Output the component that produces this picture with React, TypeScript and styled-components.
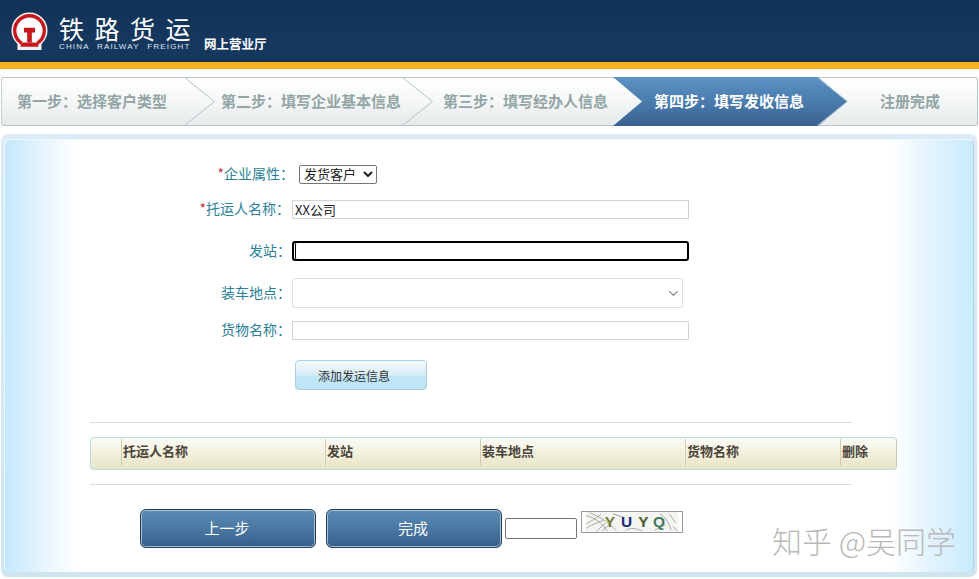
import { ChevronDown } from "lucide-react";
import styled, { createGlobalStyle } from "styled-components";

const CJK = `"Noto Sans CJK SC", "Liberation Sans", sans-serif`;

const steps = [
  { label: "第一步：选择客户类型", width: 183, inset: 15 },
  { label: "第二步：填写企业基本信息", width: 218, inset: 36 },
  { label: "第三步：填写经办人信息", width: 210, inset: 40 },
  { label: "第四步：填写发收信息", width: 205, inset: 41, active: true },
  { label: "注册完成", width: 159, inset: 62 },
];

const columns = ["", "托运人名称", "发站", "装车地点", "货物名称", "删除"];

const Logo = () => (
  <svg width="37" height="39" viewBox="0 0 40 42">
    <circle cx="20" cy="20" r="16" fill="#fff" stroke="#f2f2f2" strokeWidth="7" />
    <rect x="7" y="31" width="26" height="10" fill="#f2f2f2" />
    <path
      d="M11.400 33.500 A16 16 0 1 1 28.600 33.500"
      fill="none"
      stroke="#c8161d"
      strokeWidth="3.600"
    />
    <path d="M14 17h12v5h-3.500v11h-5V22H14z" fill="#c8161d" />
    <rect x="10.500" y="33" width="19" height="4.500" fill="#c8161d" />
  </svg>
);

const Chevron = ({ light }: { light?: boolean }) => (
  <ChevronMark width="32" height="50" viewBox="0 0 32 50">
    <path
      d="M0.500 0.500 L30.500 24.500 L0.500 48.500"
      fill="none"
      stroke={light ? "#a8c6d8" : "#b4c2c4"}
      strokeWidth="1"
    />
  </ChevronMark>
);

const Captcha = () => (
  <CaptchaBox width="102" height="22" viewBox="0 0 102 22">
    <rect width="102" height="22" fill="#f4f4f0" />
    <g stroke="#8c8c8c" strokeWidth="0.800" fill="none">
      <path d="M1 4 C10 6 18 12 24 21" />
      <path d="M4 1 C14 4 24 10 34 21" />
      <path d="M1 13 C5 10 11 8 17 2" />
      <path d="M1 18 C6 14 10 13 20 9" />
      <path d="M12 21 L22 12 M18 21 L27 13 M30 2 L42 6" />
      <path d="M44 20 C50 17 56 18 62 21 M82 2 C88 6 92 12 94 20" />
      <path d="M92 2 L99 12 M96 16 L101 21 M76 20 L88 14" />
    </g>
    <g fontFamily="Liberation Sans, sans-serif" fontWeight="700" fontSize="17">
      <text x="21" y="17" fill="#6f7a35">Y</text>
      <text x="39" y="17" fill="#1e2a78">U</text>
      <text x="58" y="17" fill="#4a5a2a">Y</text>
      <text x="74" y="17" fill="#3f7a5a">Q</text>
    </g>
  </CaptchaBox>
);

export default function App() {
  return (
    <>
      <GlobalStyle />
      <Header>
        <Logo />
        <Brand>
          <BrandName>铁路货运</BrandName>
          <BrandEnglish>CHINA RAILWAY FREIGHT</BrandEnglish>
        </Brand>
        <HallName>网上营业厅</HallName>
      </Header>
      <YellowBar />

      <StepBar>
        {steps.map((s, i) => (
          <Step
            key={s.label}
            $width={s.width}
            $inset={s.inset}
            $active={s.active}
          >
            {s.label}
            {i < steps.length - 1 && i !== 2 && <Chevron light={s.active} />}
          </Step>
        ))}
      </StepBar>

      <Panel>
        <Inner>
          <Row $top={25}>
            <FieldLabel $end={290} $gap={5}>
              <Star>*</Star>企业属性：
            </FieldLabel>
            <SmallSelect defaultValue="发货客户">
              <option>发货客户</option>
            </SmallSelect>
          </Row>
          <Row $top={16}>
            <FieldLabel $end={286} $gap={2}>
              <Star>*</Star>托运人名称：
            </FieldLabel>
            <TextInput defaultValue="XX公司" />
          </Row>
          <Row $top={22}>
            <FieldLabel $end={287}>发站：</FieldLabel>
            <FocusedInput />
          </Row>
          <Row $top={17}>
            <FieldLabel $end={287}>装车地点：</FieldLabel>
            <SelectWrap>
              <WideSelect />
              <SelectArrow size={15} strokeWidth={2} />
            </SelectWrap>
          </Row>
          <Row $top={13}>
            <FieldLabel $end={287}>货物名称：</FieldLabel>
            <TextInput />
          </Row>
          <AddButton type="button">添加发运信息</AddButton>

          <Rule $top={32} />
          <TableHead>
            {columns.map((c, i) => (
              <HeadCell key={i}>{c}</HeadCell>
            ))}
          </TableHead>
          <Rule $top={14} />

          <Actions>
            <NavButton type="button">上一步</NavButton>
            <NavButton type="button">完成</NavButton>
            <CodeInput />
            <Captcha />
          </Actions>

          <Watermark>知乎 @吴同学</Watermark>
        </Inner>
      </Panel>
    </>
  );
}

const GlobalStyle = createGlobalStyle`
  html, body {
    margin: 0;
    padding: 0;
    background: #fff;
    overflow: hidden;
  }
  body {
    font-family: ${CJK};
  }
`;

const Header = styled.header`
  height: 62px;
  box-sizing: border-box;
  padding: 12px 0 0 11px;
  display: flex;
  align-items: flex-start;
  background: linear-gradient(180deg, #123257 0%, #16385f 70%, #15365d 96%, #1c2f3a 100%);
`;

const Brand = styled.div`
  margin: 3px 0 0 11px;
  width: 134px;
  color: #fff;
`;

const BrandName = styled.div`
  font-size: 25px;
  line-height: 27px;
  letter-spacing: 10.500px;
  white-space: nowrap;
`;

const BrandEnglish = styled.div`
  font-family: "Liberation Sans", sans-serif;
  font-size: 8px;
  line-height: 9px;
  letter-spacing: 1.150px;
  word-spacing: 4.500px;
  white-space: nowrap;
  color: #dfe6ee;
`;

const HallName = styled.div`
  margin: 24px 0 0 11px;
  color: #fff;
  font-size: 12.500px;
  line-height: 16px;
  font-weight: 700;
  white-space: nowrap;
`;

const YellowBar = styled.div`
  height: 7px;
  background: #f6af1e;
`;

const StepBar = styled.nav`
  margin: 8px 1px 0;
  height: 49px;
  box-sizing: border-box;
  display: flex;
  border: 1px solid #b4c6c8;
  border-left-color: #c4d0d2;
  border-radius: 3px;
  background: linear-gradient(180deg, #ffffff 0%, #f6f8f8 45%, #e6eaea 100%);
`;

const Step = styled.div<{ $width: number; $inset: number; $active?: boolean }>`
  position: relative;
  flex: none;
  width: ${(p) => p.$width}px;
  box-sizing: border-box;
  padding: 0 0 3px ${(p) => p.$inset}px;
  display: flex;
  align-items: center;
  font-size: 15px;
  font-weight: 700;
  white-space: nowrap;
  color: ${(p) => (p.$active ? "#fff" : "#93a5a5")};
  ${(p) =>
    p.$active &&
    `
    z-index: 1;
    &::before {
      content: "";
      position: absolute;
      inset: -1px -29px -1px 0;
      z-index: -1;
      clip-path: polygon(0 0, calc(100% - 29px) 0, 100% 50%, calc(100% - 29px) 100%, 0 100%, 29px 50%);
      background: linear-gradient(180deg, #5c92c4 0%, #4a7cad 50%, #38618f 100%);
    }
  `}
`;

const ChevronMark = styled.svg`
  position: absolute;
  top: -1px;
  right: -31px;
  z-index: 2;
`;

const Panel = styled.main`
  margin: 8px 2px 0 1px;
  height: 443px;
  box-sizing: border-box;
  padding: 5px 3px 5px 3px;
  border-radius: 7px;
  background: linear-gradient(180deg, #dcebf6 0%, #d0e4f0 100%);
`;

const Inner = styled.div`
  position: relative;
  height: 100%;
  box-sizing: border-box;
  border-top: 1px solid #eef7fc;
  border-left: 1px solid #eef7fc;
  border-right: 1px solid #a9d3e8;
  border-radius: 6px;
  background: linear-gradient(
    90deg,
    #c3e8fc 0,
    #e4f4fd 36px,
    #ffffff 72px,
    #ffffff 886px,
    #e2f3fd 925px,
    #c9ebfc 968px
  );
`;

const Row = styled.div<{ $top: number }>`
  display: flex;
  align-items: center;
  margin-top: ${(p) => p.$top}px;
`;

const FieldLabel = styled.label<{ $end: number; $gap?: number }>`
  flex: none;
  width: ${(p) => p.$end - 1}px;
  margin-right: ${(p) => p.$gap ?? 1}px;
  padding-bottom: 2px;
  height: 17px;
  text-align: right;
  font-size: 14px;
  line-height: 17px;
  color: #2b7f98;
  white-space: nowrap;
`;

const Star = styled.span`
  color: #c8323c;
`;

const SmallSelect = styled.select`
  width: 78px;
  height: 19px;
  box-sizing: border-box;
  padding: 0;
  font-family: "Liberation Sans", "Noto Sans CJK SC", sans-serif;
  font-size: 13px;
  color: #222;
  background: #fff;
  border: 1px solid #767676;
  border-radius: 2px;
`;

const TextInput = styled.input`
  width: 397px;
  height: 19px;
  box-sizing: border-box;
  padding: 0 2px 1px;
  font-family: ${CJK};
  font-size: 13px;
  color: #222;
  background: #fff;
  border: 1px solid #d4d4d4;
  outline: none;
`;

const FocusedInput = styled(TextInput)`
  height: 20px;
  border: 2px solid #000;
  border-radius: 3px;
  box-shadow: inset 1px 0 0 #fff, inset 2px 0 0 #000;
`;

const SelectWrap = styled.div`
  position: relative;
  width: 391px;
  height: 30px;
`;

const WideSelect = styled.select`
  width: 100%;
  height: 100%;
  appearance: none;
  background: #fff;
  border: 1px solid #e0e0e0;
  border-radius: 2px;
`;

const SelectArrow = styled(ChevronDown)`
  position: absolute;
  top: 8px;
  right: 2px;
  color: #8a8a8a;
  pointer-events: none;
`;

const AddButton = styled.button`
  display: block;
  margin: 20px 0 0 290px;
  width: 132px;
  height: 30px;
  box-sizing: border-box;
  padding: 0 14px 0 0;
  font-family: ${CJK};
  font-size: 12px;
  color: #333;
  border: 1px solid #a9cfe0;
  border-radius: 4px;
  background: linear-gradient(180deg, #f4fafc 0%, #d8ecf4 50%, #bfe6f6 55%, #bce5f6 100%);
`;

const Rule = styled.div<{ $top: number }>`
  margin: ${(p) => p.$top}px 0 0 85px;
  width: 762px;
  height: 1px;
  background: #d9dcdc;
`;

const TableHead = styled.div`
  margin: 14px 0 0 85px;
  width: 807px;
  height: 33px;
  box-sizing: border-box;
  padding-top: 1px;
  display: grid;
  grid-template-columns: 30px 204px 155px 205px 155px 1fr;
  border: 1px solid #b9dce6;
  border-right-color: #c8c8b4;
  border-radius: 4px;
  background: linear-gradient(180deg, #fbfbf6 0%, #f2f0dd 50%, #e8e4c6 100%);
`;

const HeadCell = styled.div`
  padding-left: 1px;
  height: 27px;
  line-height: 24px;
  font-size: 13px;
  font-weight: 700;
  color: #4c443a;
  white-space: nowrap;
  &:not(:first-child) {
    border-left: 1px solid #cfccb4;
  }
`;

const Actions = styled.div`
  display: flex;
  align-items: flex-start;
  margin: 24px 0 0 135px;
`;

const NavButton = styled.button`
  width: 176px;
  height: 39px;
  margin-right: 10px;
  box-sizing: border-box;
  padding: 0 2px 3px 0;
  font-family: ${CJK};
  font-size: 15px;
  color: #fff;
  border: 1px solid #1f3f5c;
  border-radius: 6px;
  box-shadow: inset 0 0 0 1px #a9c0d2;
  background: linear-gradient(180deg, #5a8cb5 0%, #4a78a3 50%, #365e8a 100%);
`;

const CodeInput = styled.input`
  margin: 9px 0 0 -7px;
  width: 72px;
  height: 21px;
  box-sizing: border-box;
  background: #fff;
  border: 1px solid #767676;
  border-radius: 2px;
`;

const CaptchaBox = styled.svg`
  flex: none;
  margin: 2px 0 0 4px;
  border: 1px solid #999;
  box-sizing: border-box;
`;

const Watermark = styled.div`
  position: absolute;
  right: 17px;
  bottom: 13px;
  font-size: 30px;
  line-height: 38px;
  font-weight: 300;
  color: #b9b9b9;
  white-space: nowrap;
`;
